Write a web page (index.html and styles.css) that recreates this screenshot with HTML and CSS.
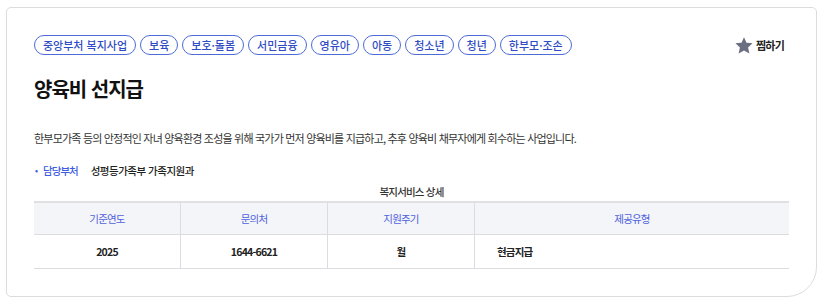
FILE: index.html
```html
<!DOCTYPE html>
<html lang="ko">
<head>
  <meta charset="UTF-8" />
  <meta name="viewport" content="width=device-width, initial-scale=1.0" />
  <title>양육비 선지급</title>
  <link rel="stylesheet" href="styles.css">
</head>
<body>
  <div class="card">
    <div class="card-top">
      <ul class="tags">
        <li class="tag">중앙부처 복지사업</li>
        <li class="tag">보육</li>
        <li class="tag">보호·돌봄</li>
        <li class="tag">서민금융</li>
        <li class="tag">영유아</li>
        <li class="tag">아동</li>
        <li class="tag">청소년</li>
        <li class="tag">청년</li>
        <li class="tag">한부모·조손</li>
      </ul>
      <button class="bookmark">
        <svg width="18" height="17" viewBox="0 0 24 23" aria-hidden="true">
          <path d="M12 0.3l3.4 7.4 8.2 0.9-6.1 5.6 1.8 8.1L12 18.2l-7.3 4.1 1.8-8.1L0.4 8.6l8.2-0.9z" fill="#6b6e80"/>
        </svg>
        찜하기
      </button>
    </div>

    <h1 class="title">양육비 선지급</h1>

    <p class="desc">한부모가족 등의 안정적인 자녀 양육환경 조성을 위해 국가가 먼저 양육비를 지급하고, 추후 양육비 채무자에게 회수하는 사업입니다.</p>

    <div class="dept">
      <span class="dot">•</span>
      <span class="dept-label">담당부처</span>
      <span class="dept-name">성평등가족부 가족지원과</span>
    </div>

    <table class="detail">
      <caption>복지서비스 상세</caption>
      <thead>
        <tr>
          <th>기준연도</th>
          <th>문의처</th>
          <th>지원주기</th>
          <th class="wide">제공유형</th>
        </tr>
      </thead>
      <tbody>
        <tr>
          <td>2025</td>
          <td>1644-6621</td>
          <td>월</td>
          <td class="left">현금지급</td>
        </tr>
      </tbody>
    </table>
  </div>
</body>
</html>
```

FILE: styles.css
```css
body {
  margin: 0;
  padding: 7px 6px 0 6px;
  background: #fff;
  font-family: "Noto Sans CJK KR", "Noto Sans", sans-serif;
  color: #222;
}
.card {
  box-sizing: border-box;
  width: 811px;
  height: 290px;
  border: 1px solid #dcdcdc;
  border-radius: 5px 5px 30px 5px;
  padding: 27px 27px 0 27px;
}
.card-top {
  display: flex;
  justify-content: space-between;
  align-items: center;
}
.tags {
  list-style: none;
  margin: 0;
  padding: 0;
  display: flex;
  gap: 4px;
}
.tag {
  box-sizing: border-box;
  height: 20px;
  line-height: 18px;
  padding: 0 8px;
  border: 1px solid #4d6ad9;
  border-radius: 10px;
  font-size: 11px;
  letter-spacing: 0;
  color: #2f4cc4;
  font-weight: 500;
}
.bookmark {
  display: flex;
  align-items: center;
  gap: 3px;
  margin-right: 5px;
  padding: 0;
  border: none;
  background: none;
  font-family: inherit;
  font-size: 11px;
  font-weight: 700;
  letter-spacing: -0.8px;
  color: #222;
  cursor: pointer;
}
.title {
  margin: 22px 0 0 0;
  font-size: 20px;
  line-height: 24px;
  font-weight: 700;
  letter-spacing: -1px;
  color: #111;
}
.desc {
  margin: 29px 0 0 0;
  font-size: 11px;
  line-height: 16px;
  letter-spacing: -0.8px;
  color: #333;
}
.dept {
  margin-top: 17px;
  display: flex;
  align-items: center;
  font-size: 10.5px;
  line-height: 16px;
  letter-spacing: -1px;
}
.dot {
  color: #3d5be0;
  margin: 0 6px 0 1px;
  font-size: 9px;
}
.dept-label {
  color: #3d5be0;
  font-weight: 500;
  margin-right: 13px;
}
.dept-name {
  color: #222;
  font-weight: 500;
  letter-spacing: -0.5px;
}
.detail {
  width: 755px;
  margin-top: 5px;
  border-collapse: collapse;
  font-size: 10.5px;
  letter-spacing: -0.8px;
}
.detail caption {
  height: 16px;
  line-height: 16px;
  color: #333;
  font-weight: 500;
  padding-bottom: 1px;
}
.detail th {
  height: 31px;
  background: #f4f5f9;
  border-top: 2px solid #e0e0e4;
  border-bottom: 1px solid #dcdce0;
  border-right: 1px solid #dcdce0;
  color: #4f63dc;
  font-weight: 400;
  width: 146px;
  padding: 0;
}
.detail th.wide,
.detail td.left {
  border-right: none;
  width: auto;
}
.detail td {
  height: 33px;
  border-bottom: 1px solid #dcdce0;
  border-right: 1px solid #dcdce0;
  text-align: center;
  font-weight: 700;
  color: #222;
  padding: 0;
}
.detail td.left {
  text-align: left;
  padding-left: 22px;
}
```
